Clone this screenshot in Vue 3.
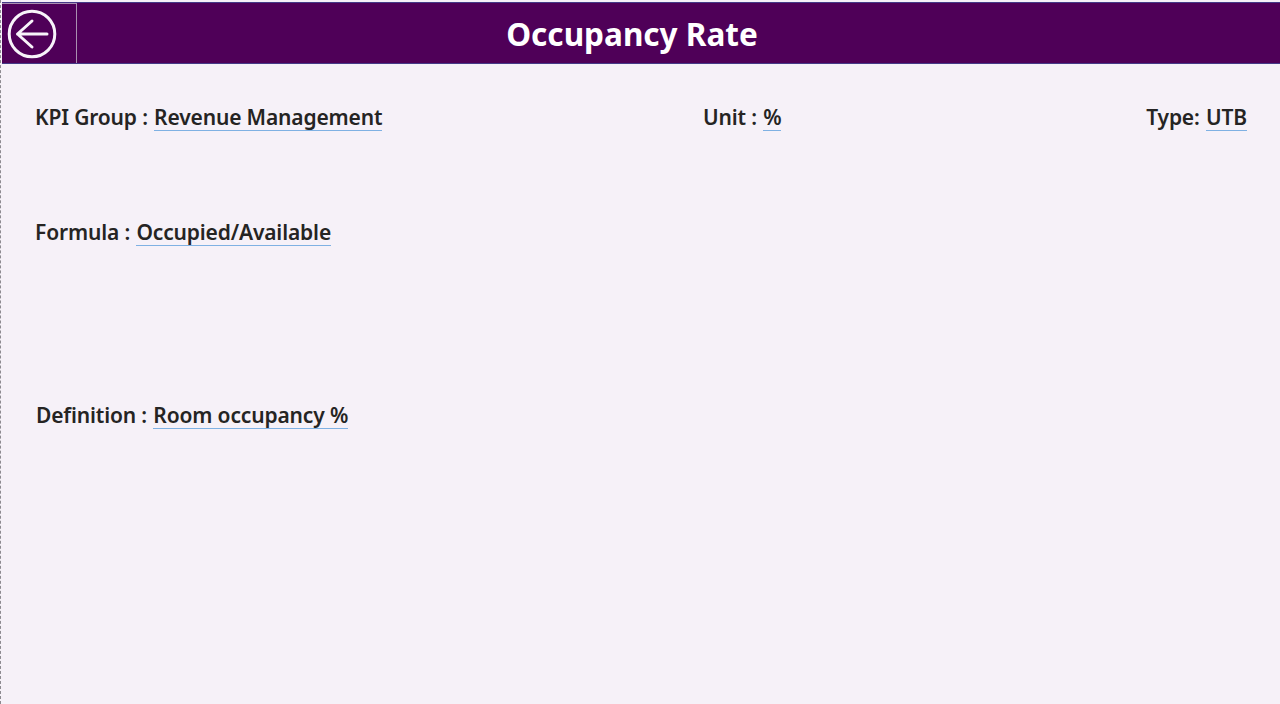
<script setup>
const topFields = [
  { label: "KPI Group :", value: "Revenue Management", cls: "kpi" },
  { label: "Unit :", value: "%", cls: "unit" },
  { label: "Type:", value: "UTB", cls: "type" },
];
</script>

<template>
  <div class="page">
    <header class="topbar">
      <button class="back" aria-label="Back">
        <svg width="50" height="50" viewBox="0 0 50 50" fill="none" stroke="#f8f3fa" stroke-width="3">
          <circle cx="25" cy="25" r="22.8" />
          <path d="M40 25H10.500M25 12 10.500 25 25 38" stroke-linecap="round" stroke-linejoin="round" />
        </svg>
      </button>
      <h1>Occupancy Rate</h1>
    </header>
    <main class="content">
      <div class="row-top">
        <p v-for="f in topFields" :key="f.label" class="field" :class="f.cls">
          {{ f.label }} <span class="val">{{ f.value }}</span>
        </p>
      </div>
      <p class="field formula">Formula : <span class="val">Occupied/Available</span></p>
      <p class="field definition">Definition : <span class="val">Room occupancy %</span></p>
    </main>
  </div>
</template>

<style>
html,
body {
  margin: 0;
  background: #f6f1f8;
}
</style>

<style scoped>
.page {
  box-sizing: border-box;
  height: 704px;
  padding: 2px 0 0 1px;
  border-left: 1px dashed #8d8a90;
  background: #f6f1f8;
  font-family: "Noto Sans", "Open Sans", sans-serif;
  overflow: hidden;
}
.topbar {
  height: 62px;
  box-sizing: border-box;
  display: flex;
  align-items: center;
  background: #4f0058;
  border-top: 1px solid #453a88;
  border-bottom: 1px solid #453a88;
}
.back {
  width: 75px;
  height: 60px;
  flex-shrink: 0;
  padding: 0 0 0 5px;
  display: flex;
  align-items: center;
  background: none;
  border: 0;
  border-right: 1px solid #a98fb0;
  border-top: 1px solid #a98fb0;
  box-sizing: border-box;
}
h1 {
  flex: 1;
  margin: 0;
  padding-right: 93px;
  text-align: center;
  color: #fff;
  font-size: 31.5px;
  font-weight: 700;
}
.content {
  padding: 0 33px 0 33px;
  color: #252423;
}
.row-top {
  display: flex;
  margin-top: 37px;
}
.field {
  margin: 0;
  font-size: 21px;
  letter-spacing: -0.15px;
  line-height: 32px;
  font-weight: 600;
  white-space: nowrap;
}
.kpi {
  width: 668px;
}
.type {
  margin-left: auto;
}
.val {
  display: inline-block;
  margin-left: 1px;
  line-height: 26px;
  border-bottom: 1px solid #7fb1e3;
}
.formula {
  margin-top: 83px;
}
.definition {
  margin-top: 151px;
  margin-left: 1px;
}
</style>
